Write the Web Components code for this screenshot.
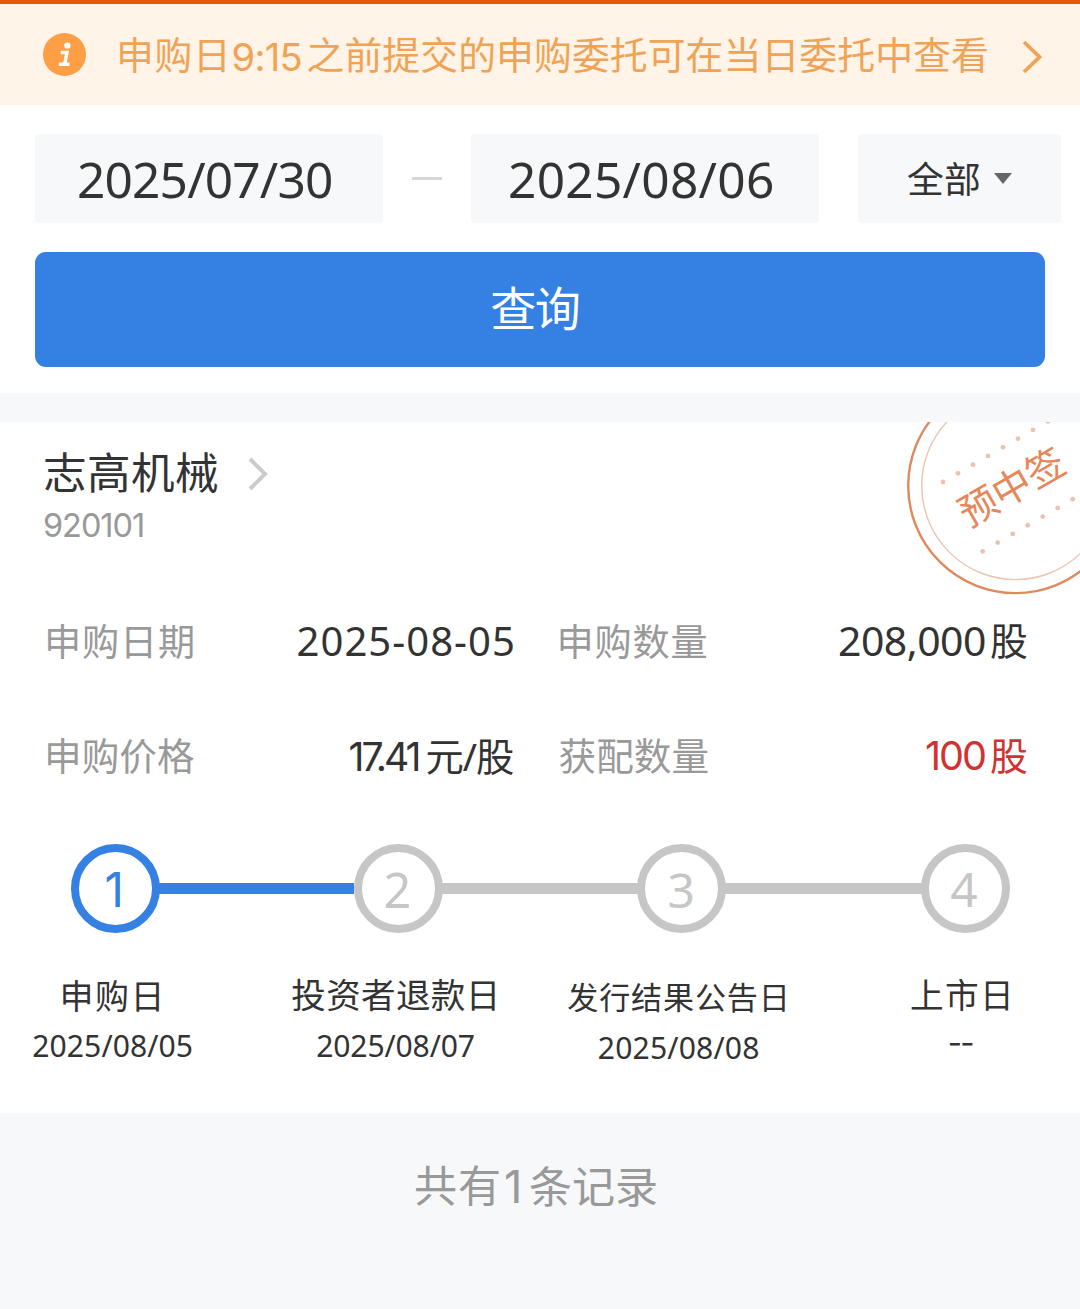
<!DOCTYPE html>
<html lang="zh-CN">
<head>
<meta charset="utf-8">
<title>申购查询</title>
<style>
  html, body { margin: 0; background: #f7f8fa; }
  body { width: 1080px; height: 1309px; overflow: hidden; font-family: "Noto Sans", "Noto Sans CJK SC", sans-serif; color: #333; }
</style>
</head>
<body>
<subscription-page></subscription-page>
<script>
const FONT = '"Noto Sans", "Noto Sans CJK SC", sans-serif';
const ctx = document.createElement('canvas').getContext('2d');

function define(name, html, setup) {
  const tpl = document.createElement('template');
  tpl.innerHTML = html;
  customElements.define(name, class extends HTMLElement {
    connectedCallback() {
      if (this.shadowRoot) return;
      this.attachShadow({ mode: 'open' }).appendChild(tpl.content.cloneNode(true));
      if (setup) setup(this, this.shadowRoot);
    }
  });
}

/* A line of text whose box is its ink: w and h give the ink size, face an optional first font. */
define('text-run', `
  <style>
    :host { display: block; flex: none; }
    span { display: block; white-space: pre; line-height: 1; }
  </style>
  <span></span>`, (el, root) => {
  const text = el.getAttribute('text');
  const face = el.getAttribute('face');
  const font = face ? `"${face}", ${FONT}` : FONT;
  const n = [...text].length;
  const w = parseFloat(el.getAttribute('w'));
  const h = parseFloat(el.getAttribute('h'));
  ctx.font = `100px ${font}`;
  let m = ctx.measureText(text);
  const size = parseFloat(el.getAttribute('size')) ||
    Math.round(h / (m.actualBoundingBoxAscent + m.actualBoundingBoxDescent) * 1000) / 10;
  ctx.font = `${size}px ${font}`;
  m = ctx.measureText(text);
  const inkW = m.actualBoundingBoxLeft + m.actualBoundingBoxRight;
  const inkH = m.actualBoundingBoxAscent + m.actualBoundingBoxDescent;
  const A = m.fontBoundingBoxAscent, D = m.fontBoundingBoxDescent;
  const baseline = (size - (A + D)) / 2 + A;
  const span = root.querySelector('span');
  span.textContent = text;
  span.style.fontSize = size + 'px';
  span.style.fontFamily = font;
  span.style.marginLeft = m.actualBoundingBoxLeft + 'px';
  span.style.marginTop = (m.actualBoundingBoxAscent - baseline) + 'px';
  if (n > 1 && w) span.style.letterSpacing = (w - inkW) / (n - 1) + 'px';
  el.style.display = 'flow-root';
  el.style.width = (n > 1 && w ? w : inkW) + 'px';
  el.style.height = inkH + 'px';
});

define('notice-bar', `
  <style>
    :host { display: flex; align-items: center; box-sizing: border-box; height: 105px; border-top: 4px solid #e85808;
      background: #fff4e7; color: #f1a355; padding: 0 38px 0 43px; }
    .info { flex: none; width: 43px; height: 43px; margin-right: 34px; margin-bottom: 1px; }
    .txt { display: flex; align-items: center; margin-top: 3px; }
    .go { flex: none; margin-left: auto; margin-top: 5px; }
  </style>
  <svg class="info" viewBox="0 0 43 43"><circle cx="21.5" cy="21.5" r="21.5" fill="#ff9f45"/>
    <circle cx="24.4" cy="12.6" r="3.2" fill="#fff"/>
    <path d="M17.8 19.5H24L21.6 31.5M15.8 31.3H26.5" fill="none" stroke="#fff" stroke-width="3.4"/></svg>
  <div class="txt">
    <text-run text="申购日" w="105" h="35.5"></text-run>
    <text-run face="Inter" text="9:15" w="67" h="29" style="margin:2px 7px 0 8.5px"></text-run>
    <text-run text="之前提交的申购委托可在当日委托中查看" w="679.5" h="36"></text-run>
  </div>
  <svg class="go" width="20" height="34" viewBox="0 0 20 34"><path d="M2 2L17.5 17L2 32" fill="none" stroke="#f1a355" stroke-width="3.8"/></svg>`);

define('field-box', `
  <style>
    :host { display: flex; align-items: center; justify-content: center; box-sizing: border-box; height: 89px;
      border-radius: 4px; background: #f7f8fa; }
  </style><slot></slot>`);

define('query-form', `
  <style>
    :host { display: block; box-sizing: border-box; height: 288px; padding: 29px 19px 0 35px; background: #fff; }
    .row { display: flex; align-items: center; }
    .date { width: 348px; padding-top: 5px; }
    .dash { width: 30px; height: 3px; margin: 0 29px; background: #d4d6dc; }
    .all { width: 203px; margin-left: auto; gap: 15px; }
    button { display: flex; align-items: center; justify-content: center; width: 1010px; height: 115px; margin: 29px 0 0;
      padding: 0 10px 0 0; border: 0; border-radius: 11px; background: #3480e3; color: #fff; }
  </style>
  <div class="row">
    <field-box class="date" style="padding-right:8px"><text-run text="2025/07/30" w="252" h="36.7"></text-run></field-box>
    <span class="dash"></span>
    <field-box class="date" style="padding-right:7px"><text-run text="2025/08/06" w="263" h="36.7"></text-run></field-box>
    <field-box class="all"><text-run text="全部" w="72" h="35" style="margin-top:1px"></text-run>
      <svg width="18" height="11" viewBox="0 0 18 11"><path d="M0 0H18L9 11Z" fill="#666"/></svg></field-box>
  </div>
  <button type="button"><text-run text="查询" w="87.5" h="43.3"></text-run></button>`);

define('status-stamp', `
  <style>:host { display: block; } svg { display: block; }</style>
  <svg width="180" height="180" viewBox="900 422 180 180">
    <circle cx="1015.5" cy="485.8" r="107.3" fill="none" stroke="#df8a5e" stroke-width="2.4"/>
    <circle cx="1015.5" cy="485.8" r="93.8" fill="none" stroke="#ecc4b2" stroke-width="1.4"/>
    <g class="dots" fill="#ebc2ae"></g>
    <text x="1011" y="501.5" transform="rotate(-30 1011 486)" text-anchor="middle" font-size="38.5" fill="#e5875a">预中签</text>
  </svg>`, (el, root) => {
  const g = root.querySelector('.dots');
  for (const [x, y, n] of [[943, 482, 8], [982.7, 551.3, 7]])
    for (let i = 0; i < n; i++) {
      const c = document.createElementNS('http://www.w3.org/2000/svg', 'circle');
      c.setAttribute('cx', x + 15 * i); c.setAttribute('cy', y - 8.68 * i); c.setAttribute('r', 2.4);
      g.appendChild(c);
    }
});

define('detail-row', `
  <style>
    :host { display: flex; align-items: center; height: 36px; padding: 0 53px 0 48px; }
    .label { display: block; color: #999; }
    .value { display: flex; align-items: center; }
    .half1 { display: flex; align-items: center; justify-content: space-between; width: 465px; }
    .half2 { display: flex; align-items: center; justify-content: space-between; flex: 1; margin-left: 46.5px; }
  </style>
  <div class="half1"><slot name="l1" class="label"></slot><div class="value"><slot name="v1"></slot></div></div>
  <div class="half2"><slot name="l2" class="label"></slot><div class="value"><slot name="v2"></slot></div></div>`);

define('step-track', `
  <style>
    :host { display: flex; align-items: center; height: 89px; padding-left: 71px; }
    .dot { display: flex; flex: none; align-items: center; justify-content: center; box-sizing: border-box; width: 89px; height: 89px;
      border: 8.5px solid #c6c6c6; border-radius: 50%; color: #c6c6c6; padding: 4px 2px 0 0; }
    .line { flex: none; width: 200.4px; height: 11px; margin: 0 -3px; background: #c6c6c6; }
    .on.dot { border-color: #3480e3; color: #3480e3; padding-right: 4px; }
    .on.line { background: #3480e3; width: 197px; margin-right: 0; }
  </style>
  <div class="dot on"><text-run face="Inter" text="1" h="35"></text-run></div><div class="line on"></div>
  <div class="dot"><text-run text="2" h="35.5"></text-run></div><div class="line"></div>
  <div class="dot"><text-run text="3" h="35.5"></text-run></div><div class="line"></div>
  <div class="dot"><text-run text="4" h="35"></text-run></div>`);

define('step-caption', `
  <style>
    :host { display: flex; flex-direction: column; align-items: center; width: 222px; }
    .name { display: flex; align-items: flex-start; height: 56px; }
    .day { padding-left: 3px; }
  </style>
  <div class="name"><slot name="name"></slot></div><div class="day"><slot></slot></div>`);

define('record-card', `
  <style>
    :host { display: block; position: relative; box-sizing: border-box; height: 691px; padding-top: 29px; overflow: hidden; background: #fff; }
    status-stamp { position: absolute; right: 0; top: 0; }
    .title { display: flex; align-items: center; height: 41px; padding-left: 45px; gap: 31px; }
    .code { display: flex; height: 25px; margin: 21px 0 0 44px; color: #999; }
    .rows { display: flex; flex-direction: column; gap: 79px; margin-top: 85px; }
    step-track { margin-top: 70px; }
    .captions { display: flex; gap: 61px; margin-top: 46px; }
    .red { color: #cf3332; }
  </style>
  <status-stamp></status-stamp>
  <div class="title"><text-run text="志高机械" w="172" h="41" style="margin-top:4px"></text-run>
    <svg width="20" height="34" viewBox="0 0 20 34" style="margin-top:4px"><path d="M2 2L17 17L2 32" fill="none" stroke="#cbcbcb" stroke-width="4"/></svg></div>
  <div class="code"><text-run face="Inter" text="920101" w="99" h="24.7"></text-run></div>
  <div class="rows">
    <detail-row>
      <text-run slot="l1" text="申购日期" w="145" h="35" style="margin-top:2px"></text-run>
      <text-run slot="v1" text="2025-08-05" w="215.5" h="29.7" style="margin-top:3px"></text-run>
      <text-run slot="l2" text="申购数量" w="146" h="35" style="margin:2px 0 0 1px"></text-run>
      <text-run slot="v2" text="208,000" w="146" h="35.2" style="margin:7px 6px 0 0"></text-run>
      <text-run slot="v2" text="股" h="34" style="margin-top:2px"></text-run>
    </detail-row>
    <detail-row>
      <text-run slot="l1" text="申购价格" w="146" h="35.3" style="margin-top:2px"></text-run>
      <text-run slot="v1" face="Inter" text="17.41" w="69" h="29" style="margin:1px 8px 0 0"></text-run>
      <text-run slot="v1" text="元/股" w="86.5" h="34.5" style="margin-top:3px"></text-run>
      <text-run slot="l2" text="获配数量" w="148" h="35.3" style="margin-top:2px"></text-run>
      <text-run slot="v2" face="Inter" class="red" text="100" w="59" h="29.7" style="margin:1px 6px 0 0"></text-run>
      <text-run slot="v2" class="red" text="股" h="34" style="margin-top:2px"></text-run>
    </detail-row>
  </div>
  <step-track></step-track>
  <div class="captions">
    <step-caption><text-run slot="name" text="申购日" w="97" h="32"></text-run><text-run text="2025/08/05" w="158.5" h="22.3" style="margin-top:1px"></text-run></step-caption>
    <step-caption><text-run slot="name" text="投资者退款日" w="202.5" h="32.5" style="margin-right:1px"></text-run><text-run text="2025/08/07" w="156.5" h="22.3" style="margin-top:1px"></text-run></step-caption>
    <step-caption style="margin-top:4px"><text-run slot="name" text="发行结果公告日" w="217.5" h="29.5" style="margin-right:2px"></text-run><text-run text="2025/08/08" w="159.5" h="22.3" style="margin-top:-1px"></text-run></step-caption>
    <step-caption><text-run slot="name" text="上市日" w="98" h="32"></text-run><text-run face="Inter" text="--" w="23.5" size="31" style="margin-top:8px"></text-run></step-caption>
  </div>`);

define('list-footer', `
  <style>
    :host { display: flex; justify-content: center; align-items: center; height: 41px; margin-top: 52px; padding-right: 7px; color: #999; }
  </style>
  <text-run text="共有" w="83" h="40.5" style="margin-top:2px"></text-run>
  <text-run face="Inter" text="1" h="33" style="margin:2px 11px 0 7px"></text-run>
  <text-run text="条记录" w="127" h="40.5" style="margin-top:2px"></text-run>`);

define('subscription-page', `
  <style>
    :host { display: flex; flex-direction: column; width: 1080px; height: 1309px; background: #f7f8fa; }
    record-card { margin-top: 29px; }
  </style>
  <notice-bar></notice-bar>
  <query-form></query-form>
  <record-card></record-card>
  <list-footer></list-footer>`);
</script>
</body>
</html>
